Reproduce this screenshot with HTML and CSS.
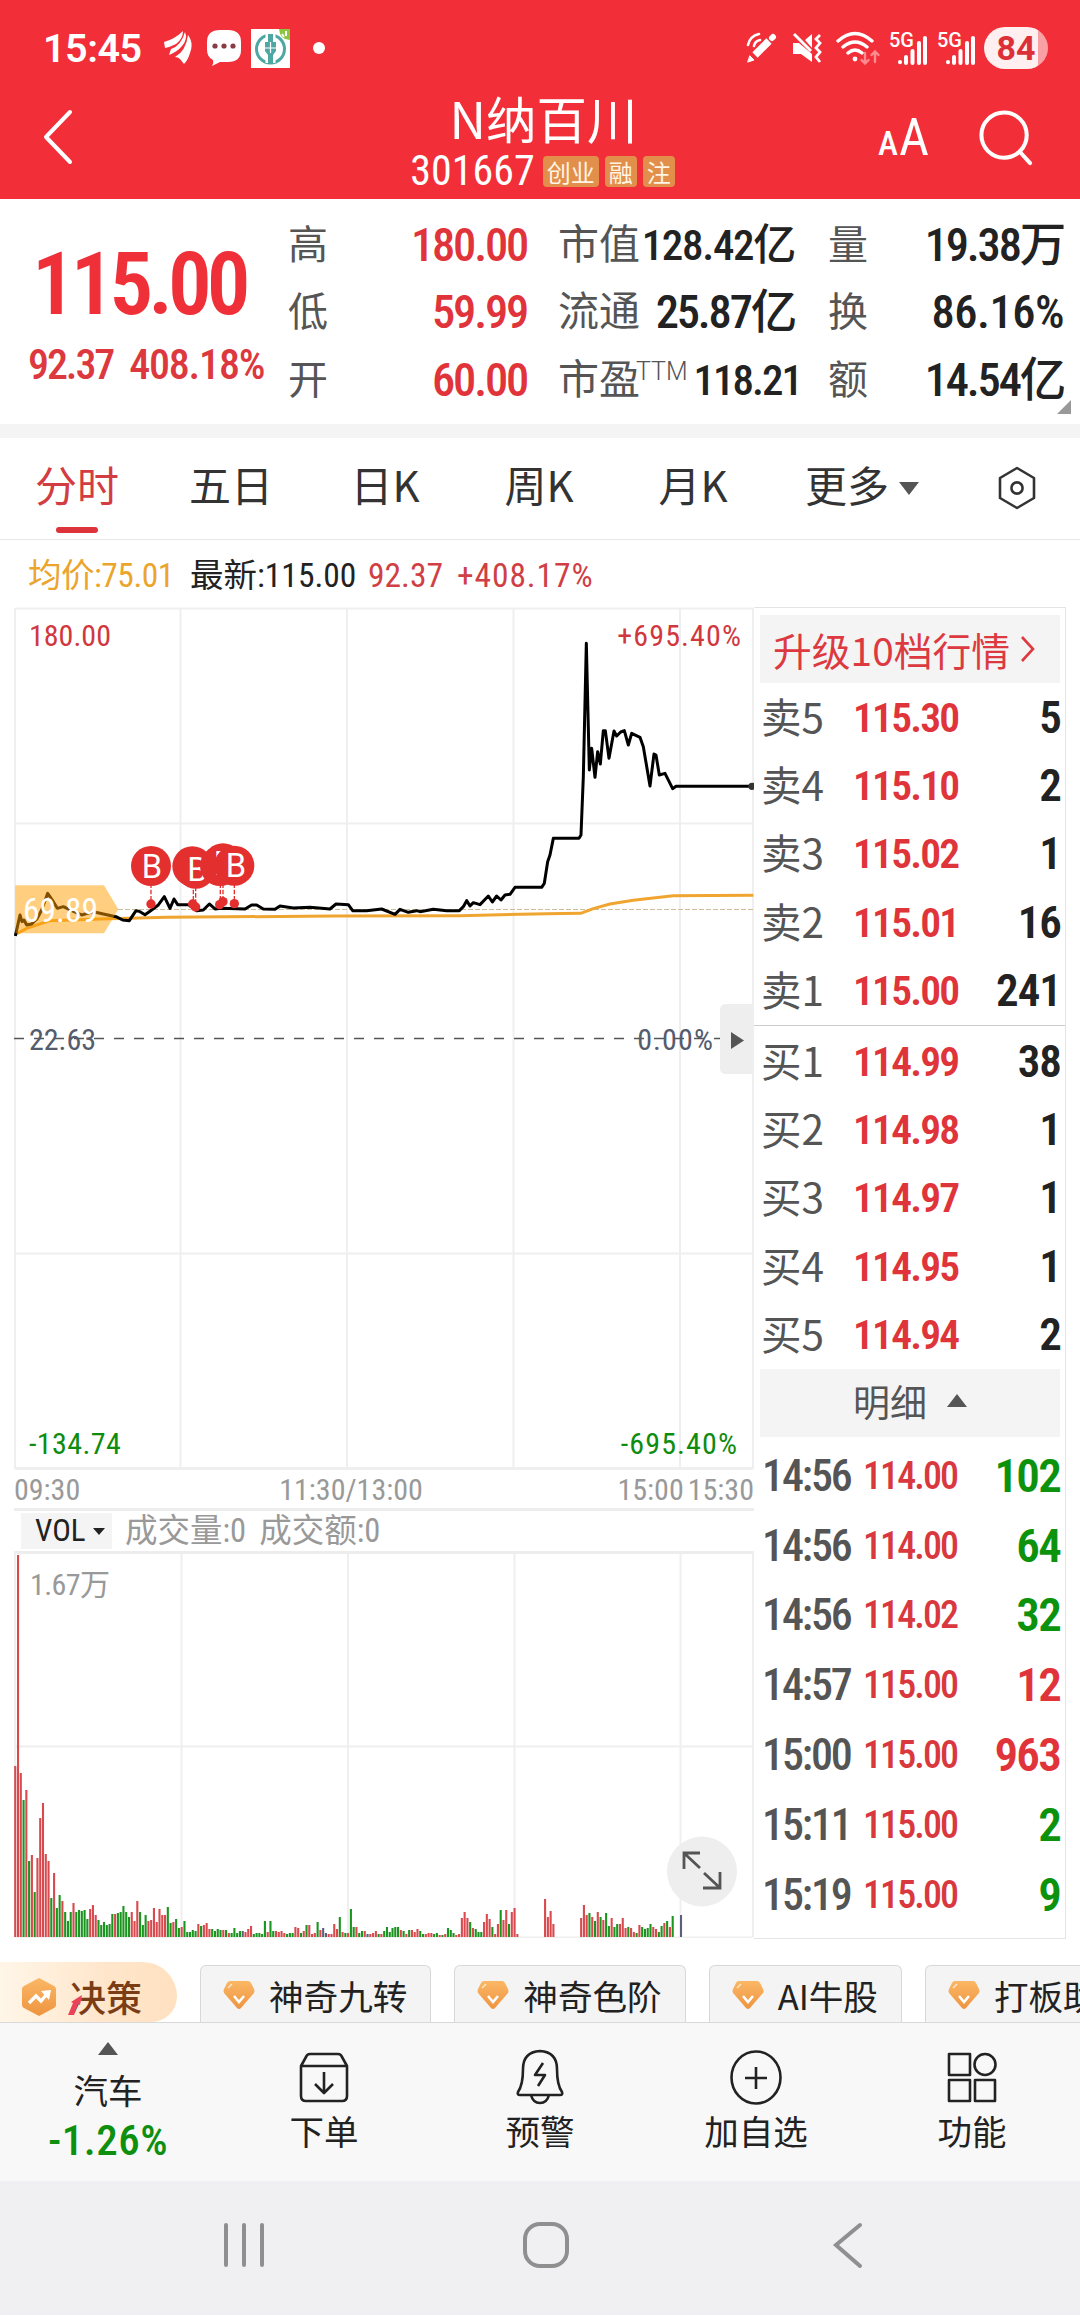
FILE: index.html
```
<!DOCTYPE html>
<html lang="zh-CN">
<head>
    <meta charset="UTF-8">
    <meta name="viewport" content="width=device-width, initial-scale=1.0">
    <title>N纳百川 301667</title>
    <link rel="stylesheet" href="styles.css">
</head>
<body>
    <header class="header">
        <div class="status-bar">
            <span class="clock">15:45</span>
            <svg class="st-feather" width="30" height="34" viewBox="0 0 30 34" fill="#fff">
                <path d="M1 11 Q12 8 20 0 Q20 8 13 13 Q7 16 2 17 Z"/>
                <path d="M22 1 Q25 8 19 15 Q14 21 6 24 L8 18 Q18 15 22 1 Z"/>
                <path d="M25 4 Q31 12 27 22 Q25 29 21 33 L17 28 Q15 26 12 26 Q23 20 25 4 Z"/>
            </svg>
            <svg class="st-bubble" width="36" height="38" viewBox="0 0 36 38">
                <path d="M14 1 H22 Q35 1 35 13 V21 Q35 33 22 33 H14 L6 37 Q8 34 7 31 Q1 28 1 21 V13 Q1 1 14 1 Z" fill="#fff"/>
                <g fill="#8c3b45"><circle cx="9" cy="17" r="2.6"/><circle cx="18" cy="17" r="2.6"/><circle cx="27" cy="17" r="2.6"/></g>
            </svg>
            <svg class="st-bank" width="39" height="39" viewBox="0 0 39 39">
                <rect width="39" height="39" fill="#fff"/>
                <path d="M28 0 H39 V11 Q29 11 28 0 Z" fill="#8cc63f"/>
                <path d="M31 5 L33 8 M35 2 V7" stroke="#fff" stroke-width="2"/>
                <circle cx="19.500" cy="20" r="14" fill="none" stroke="#4fa7a3" stroke-width="3"/>
                <path d="M19.500 4 V34" stroke="#fff" stroke-width="10"/>
                <path d="M17 5 H22 V13 H25 V22 L22 26 V34 H17 V26 L14 22 V13 H17 Z" fill="#4fa7a3"/>
                <path d="M19.500 13 V24 M14 19 H25" stroke="#fff" stroke-width="1.200"/>
            </svg>
            <span class="st-dot"></span>
            <div class="st-right">
                <svg width="32" height="32" viewBox="0 0 32 32" fill="none" stroke="#fff" stroke-linecap="round">
                    <path d="M9 23 L23 9" stroke-width="7.500" stroke-linecap="butt"/>
                    <path d="M26 6 L27 5" stroke-width="6"/>
                    <path d="M2 30 L8 28 L4 24 Z" fill="#fff" stroke-width="1"/>
                    <path d="M2 13 Q4 4 13 2 M8 14 Q9 9 14 8" stroke-width="2.600"/>
                </svg>
                <svg width="30" height="32" viewBox="0 0 30 32">
                    <path d="M1 11 H7 L20 22 V30 L9 22 H1 Z M13 8 L20 2 V16 Z" fill="#fff"/>
                    <path d="M2 2 L19 19" stroke="#fff" stroke-width="3"/>
                    <path d="M28 3 L24 7 L28 11 L24 16 L28 20 L24 25 L28 30" fill="none" stroke="#fff" stroke-width="2.800"/>
                </svg>
                <svg class="wifi" width="44" height="34" viewBox="0 0 44 34" fill="none" stroke="#fff" stroke-width="3.400" stroke-linecap="round">
                    <path d="M2 10 Q19 -5 36 10 M7 16 Q19 6 31 16 M12 22 Q19 16 26 22"/>
                    <circle cx="19" cy="28" r="2.400" fill="#fff" stroke="none"/>
                    <path d="M29 22 V32 M25.500 29 L29 32.500 L32.500 29 M39 31 V21 M35.500 24 L39 20.500 L42.500 24" stroke="#ff8a8f" stroke-width="2.400"/>
                </svg>
                <span class="signal"><i>5G</i>
                    <svg width="40" height="34" viewBox="0 0 40 34" stroke="#fff" stroke-width="4" stroke-linecap="round">
                        <path d="M12 31 V31.200 M18 26 V32 M24.500 20 V32 M31 12 V32 M37 7 V32"/>
                    </svg>
                </span>
                <span class="signal"><i>5G</i>
                    <svg width="40" height="34" viewBox="0 0 40 34" stroke="#fff" stroke-width="4" stroke-linecap="round">
                        <path d="M12 31 V31.200 M18 26 V32 M24.500 20 V32 M31 12 V32 M37 7 V32"/>
                    </svg>
                </span>
                <span class="battery">84</span>
            </div>
        </div>
        <div class="title-bar">
            <svg class="back" width="36" height="60" viewBox="0 0 36 60" fill="none" stroke="#fff" stroke-width="4" stroke-linecap="round" stroke-linejoin="round">
                <path d="M28 6 L4 31 L28 56"/>
            </svg>
            <div class="stock">
                <div class="stock-name">N纳百川</div>
                <div class="stock-code"><span class="code">301667</span><b>创业</b><b>融</b><b>注</b></div>
            </div>
            <div class="title-tools">
                <span class="font-size"><small>A</small>A</span>
                <svg width="54" height="56" viewBox="0 0 56 58" fill="none" stroke="#fff" stroke-width="4.200" stroke-linecap="round">
                    <circle cx="26" cy="26" r="23.500"/><path d="M42 43 L53 55"/>
                </svg>
            </div>
        </div>
    </header>

    <section class="quote">
        <div class="price-box">
            <div class="price">115.00</div>
            <div class="change"><span>92.37</span><span>408.18%</span></div>
        </div>
        <dl class="col col-price">
            <div><dt>高</dt><dd class="red">180.00</dd></div>
            <div><dt>低</dt><dd class="red">59.99</dd></div>
            <div><dt>开</dt><dd class="red">60.00</dd></div>
        </dl>
        <dl class="col col-cap">
            <div><dt>市值</dt><dd class="tight">128.42亿</dd></div>
            <div><dt>流通</dt><dd>25.87亿</dd></div>
            <div><dt>市盈<sup>TTM</sup></dt><dd class="tight ttm">118.21</dd></div>
        </dl>
        <dl class="col col-vol">
            <div><dt>量</dt><dd>19.38万</dd></div>
            <div><dt>换</dt><dd class="pct">86.16%</dd></div>
            <div><dt>额</dt><dd>14.54亿</dd></div>
        </dl>
        <i class="corner"></i>
    </section>

    <nav class="tabs">
        <span class="active">分时</span>
        <span>五日</span>
        <span>日K</span>
        <span>周K</span>
        <span>月K</span>
        <span>更多<i class="down"></i></span>
        <span>
            <svg width="38" height="44" viewBox="0 0 38 44" fill="none" stroke="#333" stroke-width="2.600" stroke-linejoin="round">
                <path d="M19 2 L36 12 V32 L19 42 L2 32 V12 Z"/><circle cx="19" cy="22" r="5.600"/>
            </svg>
        </span>
    </nav>

    <div class="info-line">
        <span class="avg">均价:75.01</span>
        <span>最新:115.00</span>
        <span class="up">92.37</span>
        <span class="up pct">+408.17%</span>
    </div>

    <main class="board">
        <div class="charts">
            <svg class="chart" width="740" height="863" viewBox="14 607 740 863">
                <g class="grid">
                    <path d="M15 608.500 H753 M15 608 V1469 M753 608 V1469 M15 823.500 H753 M15 1253.500 H753"/>
                    <path d="M180.500 608 V1469 M347 608 V1469 M513.500 608 V1469 M680 608 V1469"/>
                    <path d="M15 1468.500 H753" stroke-width="3"/>
                </g>
                <path class="zero" d="M14 1038.500 H722"/>
                <path class="last" d="M118 909.500 H753"/>
                <g transform="translate(0 600) scale(.33333)">
                    <path class="avg-line" d="M46 1003 L80 985 L150 962 L300 957 L500 952 L1000 948 L1380 947 L1640 941 L1742 940 L1780 926 L1830 912 L1900 901 L2020 887 L2260 886"/>
                    <path class="price-line" d="M46 1008 L60 945 L66 965 L72 960 L80 975 L95 972 L112 955 L125 930 L143 880 L160 905 L172 925 L190 920 L215 932 L245 945 L280 935 L320 944 L348 950 L368 960 L388 962 L408 932 L420 935 L435 944 L452 932 L475 915 L493 890 L510 925 L522 897 L533 914 L565 914 L580 925 L590 932 L610 930 L628 912 L645 927 L665 925 L735 927 L755 915 L770 915 L790 927 L825 928 L840 918 L880 924 L930 922 L990 927 L1008 912 L1045 914 L1058 932 L1100 932 L1145 927 L1185 943 L1200 928 L1225 937 L1250 932 L1260 935 L1300 928 L1340 932 L1378 932 L1390 920 L1400 902 L1410 918 L1420 908 L1440 914 L1465 888 L1477 906 L1490 888 L1503 900 L1515 885 L1530 883 L1545 862 L1625 862 L1633 850 L1643 785 L1650 765 L1660 715 L1737 715 L1743 705 L1750 530 L1759 130 L1768 510 L1775 445 L1785 532 L1793 455 L1801 492 L1810 392 L1816 392 L1827 475 L1842 393 L1850 408 L1862 396 L1873 392 L1885 435 L1895 400 L1920 412 L1930 440 L1950 558 L1962 462 L1968 465 L1978 525 L1995 520 L2018 566 L2028 559 L2260 559"/>
                    <path d="M46 856 H312 L355 928 L312 1000 H46 Z" fill="#ffa000" fill-opacity=".5"/>
                    <circle cx="2256" cy="559" r="11" fill="#333"/>
                    <path class="stem" d="M453 850 V912 M580 850 V912 M587 860 V912 M661 850 V912 M669 850 V912 M703 850 V912"/>
                    <g fill="#e3302f">
                        <circle cx="453" cy="912" r="14"/><circle cx="578" cy="912" r="14"/><circle cx="587" cy="921" r="14"/>
                        <circle cx="659" cy="914" r="14"/><circle cx="669" cy="905" r="14"/><circle cx="703" cy="911" r="14"/>
                    </g>
                    <g class="mark">
                        <circle cx="453" cy="798" r="60"/><text x="456" y="833">B</text>
                        <circle cx="577" cy="799" r="60"/>
                        <circle cx="587" cy="806" r="60"/><text x="592" y="843">B</text>
                        <circle cx="660" cy="798" r="60"/>
                        <circle cx="669" cy="790" r="60"/><text x="672" y="825">B</text>
                        <circle cx="703" cy="797" r="60"/><text x="708" y="831">B</text>
                    </g>
                </g>
                <g class="axis">
                    <text x="23" y="922" class="tag">69.89</text>
                    <text x="29" y="646" fill="#d0383e">180.00</text>
                    <text x="742" y="646" fill="#d0383e" class="pct">+695.40%</text>
                    <text x="29" y="1050" fill="#555c6e">22.63</text>
                    <text x="714" y="1050" fill="#555c6e" class="pct">0.00%</text>
                    <text x="29" y="1454" fill="#0e8c0e" letter-spacing=".4">-134.74</text>
                    <text x="738" y="1454" fill="#0e8c0e" class="pct">-695.40%</text>
                </g>
                <path d="M753 1004 H726 Q720 1004 720 1010 V1068 Q720 1074 726 1074 H753 Z" fill="#eee"/>
                <path d="M731 1032 L744 1040.500 L731 1049 Z" fill="#555"/>
            </svg>
            <div class="times">
                <span>09:30</span><span>11:30/13:00</span><span class="t-close">15:00</span><span>15:30</span>
            </div>
            <div class="vol-head">
                <span class="vol-pick">VOL<i class="down"></i></span>
                <span>成交量:0</span>
                <span>成交额:0</span>
            </div>
            <svg class="volume" width="740" height="384" viewBox="14 1553 740 384">
                <g class="grid">
                    <path d="M15 1553 V1936 M753 1553 V1936 M15 1745.500 H753 M15 1936.500 H753"/>
                    <path d="M181.500 1553 V1936 M348 1553 V1936 M514.500 1553 V1936 M680.500 1553 V1936"/>
                </g>
                <g id="bars"></g>
                <text x="30" y="1594" fill="#999">1.67万</text>
                <circle cx="702" cy="1870.500" r="35" fill="#eee"/>
                <path d="M700 1867 L685 1853 M684 1868 V1852 H700 M704 1872 L719 1886 M703 1887 H720 V1871" fill="none" stroke="#555" stroke-width="2.800"/>
            </svg>
        </div>

        <aside class="depth">
            <div class="upgrade">升级10档行情
                <svg width="16" height="28" viewBox="0 0 16 28" fill="none" stroke="#dc3a40" stroke-width="2.600"><path d="M2 2 L13 14 L2 26"/></svg>
            </div>
            <ul class="orders sell">
                <li><span>卖5</span><b>115.30</b><em>5</em></li>
                <li><span>卖4</span><b>115.10</b><em>2</em></li>
                <li><span>卖3</span><b>115.02</b><em>1</em></li>
                <li><span>卖2</span><b>115.01</b><em>16</em></li>
                <li><span>卖1</span><b>115.00</b><em>241</em></li>
            </ul>
            <ul class="orders buy">
                <li><span>买1</span><b>114.99</b><em>38</em></li>
                <li><span>买2</span><b>114.98</b><em>1</em></li>
                <li><span>买3</span><b>114.97</b><em>1</em></li>
                <li><span>买4</span><b>114.95</b><em>1</em></li>
                <li><span>买5</span><b>114.94</b><em>2</em></li>
            </ul>
            <div class="detail-head">明细<i class="tri-up"></i></div>
            <ul class="ticks">
                <li><span>14:56</span><b>114.00</b><em class="green">102</em></li>
                <li><span>14:56</span><b>114.00</b><em class="green">64</em></li>
                <li><span>14:56</span><b>114.02</b><em class="green">32</em></li>
                <li><span>14:57</span><b>115.00</b><em class="red">12</em></li>
                <li><span>15:00</span><b>115.00</b><em class="red">963</em></li>
                <li><span>15:11</span><b>115.00</b><em class="green">2</em></li>
                <li><span>15:19</span><b>115.00</b><em class="green">9</em></li>
            </ul>
        </aside>
    </main>

    <div class="chips">
        <span class="decision">
            <svg width="36" height="40" viewBox="0 0 36 40">
                <path d="M18 1 L33 9 Q35 10 35 12 V28 Q35 30 33 31 L18 39 L3 31 Q1 30 1 28 V12 Q1 10 3 9 Z" fill="url(#gold)"/>
                <path d="M8 26 L15 19 L20 24 L27 16" fill="none" stroke="#fff" stroke-width="3.400"/>
                <path d="M20 14 L30 13 L28 23 Z" fill="#fff"/>
            </svg>
            <span>决策</span>
            <svg class="arrow" width="16" height="22" viewBox="0 0 16 22"><path d="M1 21 L6 9 L4 8 L15 1 L13 11 L11 10 L7 21 Z" fill="#e9435a"/></svg>
        </span>
        <span class="chip"><svg width="32" height="30"><use href="#gem"/></svg>神奇九转</span>
        <span class="chip"><svg width="32" height="30"><use href="#gem"/></svg>神奇色阶</span>
        <span class="chip"><svg width="32" height="30"><use href="#gem"/></svg>AI牛股</span>
        <span class="chip"><svg width="32" height="30"><use href="#gem"/></svg>打板助手</span>
    </div>

    <nav class="toolbar">
        <div class="index">
            <i class="tri-up"></i>
            <span>汽车</span>
            <strong>-1.26%</strong>
        </div>
        <div>
            <svg width="54" height="58" viewBox="0 0 54 58">
                <path d="M4 17 L9 8 Q10 5 13 5 H41 Q44 5 45 8 L50 17 V47 Q50 52 45 52 H9 Q4 52 4 47 Z M4 17 H50 M27 23 V43 M18 35 L27 44 L36 35"/>
            </svg>
            <span>下单</span>
        </div>
        <div>
            <svg width="54" height="58" viewBox="0 0 54 58">
                <path d="M27 2 Q44 3 44 20 Q44 36 49 43 Q50 46 47 46 H7 Q4 46 5 43 Q10 36 10 20 Q10 3 27 2 Z M18 46 Q20 54 27 54 Q34 54 36 46 M30 14 L22 26 H32 L25 37"/>
            </svg>
            <span>预警</span>
        </div>
        <div>
            <svg width="54" height="58" viewBox="0 0 54 58">
                <ellipse cx="27" cy="28.500" rx="24.500" ry="26"/><path d="M27 18 V40 M16 29 H38"/>
            </svg>
            <span>加自选</span>
        </div>
        <div>
            <svg width="54" height="58" viewBox="0 0 54 58">
                <path d="M4 5 H25 V26 H4 Z M4 31 H25 V52 H4 Z M30 31 H50 V52 H30 Z"/><circle cx="40" cy="15.500" r="10.500"/>
            </svg>
            <span>功能</span>
        </div>
    </nav>

    <footer class="sys-nav">
        <svg width="48" height="48" viewBox="0 0 48 48"><path d="M6 4 V44 M24 4 V44 M42 4 V44"/></svg>
        <svg width="48" height="48" viewBox="0 0 48 48"><rect x="3" y="3" width="42" height="42" rx="15"/></svg>
        <svg width="48" height="48" viewBox="0 0 48 48"><path d="M36 4 L12 24 L36 45"/></svg>
    </footer>

    <svg width="0" height="0" class="defs">
        <linearGradient id="gold" x1="0" y1="0" x2="0" y2="1">
            <stop offset="0" stop-color="#fbb765"/><stop offset="1" stop-color="#ee9440"/>
        </linearGradient>
        <symbol id="gem" viewBox="0 0 32 30">
            <path d="M7 1 H25 Q27 1 28 3 L31 9 Q32 11 31 13 L18 28 Q16 30 14 28 L1 13 Q0 11 1 9 L4 3 Q5 1 7 1 Z" fill="url(#gold)"/>
            <path d="M11 16 L16 22 L21 16" fill="none" stroke="#fff" stroke-width="2.600"/>
            <path d="M5 8 L9 4" stroke="#fff" stroke-width="1.400" opacity=".7"/>
        </symbol>
    </svg>

    <script>
        // minute volume, height in px + direction (r up, g down, d flat), 0 = no trade
        const volume = `171r 382r 164r 137g 147r 76g 82r 45g 79r 119r 134r 83r 76r 39g 64r 29g 42g 36r 25g 16g
            25g 34r 25g 27g 26g 27g 18g 28r 32r 22r 17g 12g 15g 12g 13g 23g 23r 24g 25g 31g
            25g 20g 25r 16r 36r 25g 12g 22g 16r 17r 29r 15r 28r 22r 22r 30g 14g 15r 18g 9g
            10r 16g 5g 5g 7g 6g 13r 11g 12r 14r 8r 8g 6g 8g 7g 7r 7g 4r 4g 9g
            4g 6g 6d 5r 8r 11r 3g 4g 4g 3g 16g 5r 16g 6g 6r 5r 6r 4r 3g 4g
            4g 10r 9r 4g 6r 12g 12r 3r 4r 15g 7r 9d 4d 3r 3r 13r 8r 20g 5r 4g
            4r 28g 10g 10r 4g 6g 6r 3d 3r 4r 6r 3g 3r 6g 10g 5g 9g 10g 10g 7r
            6g 3r 7g 7r 5r 8r 6g 3g 3r 4r 4r 3g 4g 2r 2g 3r 9g 7g 4g 2r
            3r 19r 25r 19r 15g 9r 8g 5g 5g 15r 23r 18r 10g 3r 13r 27g 17r 27r 13g 25r
            29r 3r 0 0 0 0 0 0 0 0 0 38r 20r 26r 13r 0 0 0 0 0
            0 0 0 0 19r 32r 22r 24g 20r 16g 25r 20g 17r 24g 11g 19r 10g 13g 13r 19r
            9r 10g 9r 5r 4g 12r 10g 8g 9g 13g 10r 8r 5g 11g 14r 16g 10r 21g 0 0 22d`.split(/\s+/);
        const colors = { r: '#d94a4f', g: '#1c9420', d: '#5a5f7a' };
        const bars = document.getElementById('bars');
        volume.forEach((v, i) => {
            const h = parseInt(v);
            if (!h) return;
            const rect = document.createElementNS('http://www.w3.org/2000/svg', 'rect');
            rect.setAttribute('x', 14.2 + i * 2.774);
            rect.setAttribute('y', 1936 - h);
            rect.setAttribute('width', 2.1);
            rect.setAttribute('height', h);
            rect.setAttribute('fill', colors[v.slice(-1)]);
            bars.appendChild(rect);
        });
    </script>
</body>
</html>
```
FILE: styles.css
```
* {
    box-sizing: border-box;
}
body {
    margin: 0;
    width: 1080px;
    height: 2316px;
    overflow: hidden;
    background: #fff;
    color: #333;
    font-family: Roboto, "Noto Sans CJK SC", sans-serif;
    font-stretch: 75%;
}
svg {
    display: block;
    flex: none;
}
ul, dl, dd {
    margin: 0;
    padding: 0;
    list-style: none;
}
i, em {
    font-style: normal;
}
.defs {
    position: absolute;
}
.red {
    color: #e1343a;
}
.green {
    color: #0d920d;
}

/* header */
.header {
    height: 199px;
    background: #f22f38;
    color: #fff;
}
.status-bar {
    height: 96px;
    padding: 0 32px 0 43px;
    display: flex;
    align-items: center;
}
.clock {
    width: 98px;
    font-size: 39.5px;
    font-weight: 600;
    font-stretch: 100%;
    letter-spacing: -0.5px;
}
.st-feather {
    margin-left: 22px;
}
.st-bubble {
    margin-left: 13px;
}
.st-bank {
    margin-left: 9px;
}
.st-dot {
    width: 12px;
    height: 12px;
    margin-left: 23px;
    border-radius: 50%;
    background: #fff;
}
.st-right {
    margin-left: auto;
    display: flex;
    align-items: center;
}
.st-right svg {
    margin-right: 14px;
}
.st-right .wifi {
    margin-right: 8px;
}
.st-right .signal {
    position: relative;
    margin-right: 8px;
}
.st-right .signal svg {
    margin: 0;
}
.signal i {
    position: absolute;
    left: 1px;
    top: -1px;
    font-size: 20px;
    line-height: 20px;
    font-weight: 500;
    font-stretch: 88%;
}
.battery {
    width: 64px;
    height: 42px;
    border-radius: 21px;
    background: linear-gradient(90deg, #ffeff0 84%, #f9a0a5 84%);
    color: #dc3038;
    font-size: 34px;
    line-height: 43px;
    font-weight: 700;
    font-stretch: 100%;
    text-align: center;
}
.title-bar {
    height: 103px;
    display: grid;
    grid-template-columns: 300px 1fr 300px;
}
.back {
    margin: 10px 0 0 42px;
}
.stock {
    text-align: center;
}
.stock-name {
    margin: -4px 0 0 7px;
    font: 400 50.5px/50px "Noto Sans CJK SC", sans-serif;
}
.stock-code {
    display: flex;
    justify-content: center;
    align-items: center;
    gap: 6px;
    height: 32px;
    margin: 13px 0 0 5px;
}
.code {
    margin-right: 2px;
    font-size: 42px;
    line-height: 32px;
    font-weight: 400;
}
.stock-code b {
    padding: 0 4px;
    border-radius: 4px;
    background: #e28f4b;
    color: #fff5e4;
    font: 400 24px/31px "Noto Sans CJK SC", sans-serif;
}
.title-tools {
    display: flex;
    justify-content: flex-end;
    align-items: flex-start;
    padding-right: 47px;
}
.title-tools svg {
    margin-top: 14px;
}
.font-size {
    margin: 12px 50px 0 0;
    font-size: 52px;
    line-height: 60px;
    font-weight: 400;
    font-stretch: 84%;
}
.font-size small {
    margin-right: 1px;
    font-size: 34px;
    font-weight: 500;
}

/* quote */
.quote {
    position: relative;
    height: 239px;
    display: grid;
    grid-template-columns: 288px 239px 31px 237px 33px 236px;
    border-bottom: 14px solid #f4f4f4;
    padding-top: 13px;
}
.price {
    margin-top: 28px;
    padding-left: 32px;
    color: #f03038;
    font-size: 87px;
    line-height: 88px;
    font-weight: 600;
    letter-spacing: -5px;
}
.change {
    display: flex;
    margin-top: 12px;
    padding-left: 28px;
    gap: 16px;
    color: #dc383e;
    font-size: 42px;
    line-height: 50px;
    font-weight: 500;
    letter-spacing: -2.1px;
}
.change span + span {
    letter-spacing: -1.2px;
}
.col-price {
    grid-column: 2;
}
.col-cap {
    grid-column: 4;
}
.col-vol {
    grid-column: 6;
}
.col div {
    display: flex;
    justify-content: space-between;
    height: 67.3px;
    line-height: 67px;
}
.col dt {
    color: #555;
    font-size: 40px;
    white-space: nowrap;
}
.col dd {
    color: #222;
    font-size: 46.5px;
    font-weight: 500;
    letter-spacing: -2.2px;
    white-space: nowrap;
}
.col dd.red {
    color: #e1343a;
}
.col dd.pct {
    letter-spacing: -0.5px;
}
.col dd.tight {
    font-size: 43px;
    letter-spacing: -1.3px;
}
.col dd.ttm {
    margin-right: -6px;
    letter-spacing: -2px;
}
.col-cap dt {
    width: 81px;
    font-size: 41px;
}
.col sup {
    display: inline-block;
    margin-left: -4px;
    vertical-align: 14px;
    font-size: 25px;
    line-height: 20px;
    font-weight: 300;
    font-stretch: 95%;
}
.corner {
    position: absolute;
    right: 9px;
    bottom: 10px;
    border: 7.5px solid #999;
    border-top-color: transparent;
    border-left-color: transparent;
}

/* tabs */
.tabs {
    height: 102px;
    display: grid;
    grid-template-columns: repeat(5, 154px) 184px 126px;
    border-bottom: 1px solid #e8e8e8;
    font: 400 42px/92px "Noto Sans CJK SC", sans-serif;
}
.tabs span {
    position: relative;
    display: flex;
    justify-content: center;
    height: 92px;
    align-items: center;
}
.tabs svg, .tabs .down {
    position: relative;
    top: 4px;
}
.tabs .active {
    color: #d23c42;
}
.tabs .active::after {
    content: "";
    position: absolute;
    left: 56px;
    bottom: -3px;
    width: 42px;
    height: 6px;
    border-radius: 3px;
    background: #dc343a;
}
.down {
    margin-left: 10px;
    border: 10px solid transparent;
    border-top: 13px solid #555;
    border-bottom: 0;
}
.info-line {
    height: 67px;
    padding: 5px 0 0 28px;
    display: grid;
    grid-template-columns: 162px 178px 89px 200px;
    align-items: center;
    color: #222;
    font-size: 33.5px;
    line-height: 60px;
    white-space: nowrap;
}
.info-line .avg {
    color: #eba42c;
    letter-spacing: -0.5px;
}
.info-line .up {
    color: #cf3f45;
}
.info-line .pct {
    letter-spacing: 0.9px;
}

/* board */
.board {
    height: 1332px;
    display: flex;
    padding-left: 14px;
}
.charts {
    width: 740px;
}
.grid {
    fill: none;
    stroke: #efefef;
    stroke-width: 2;
}
.zero {
    stroke: #555;
    stroke-width: 1.5;
    stroke-dasharray: 10 10;
}
.last {
    stroke: #cdbd9b;
    stroke-dasharray: 5 2;
}
.avg-line, .price-line {
    fill: none;
    stroke: #f0a531;
    stroke-width: 9;
    stroke-linejoin: round;
}
.price-line {
    stroke: #000;
}
.stem {
    stroke: #e3302f;
    stroke-width: 4;
    stroke-dasharray: 14 5;
}
.mark circle {
    fill: #e3302f;
}
.mark text {
    fill: #fff;
    font-size: 98px;
    font-stretch: 90%;
    text-anchor: middle;
}
.axis, .volume {
    font-size: 30px;
}
.axis .tag {
    fill: #fff;
    font-size: 33.5px;
}
.axis .pct {
    letter-spacing: 1.1px;
    text-anchor: end;
}
.times {
    height: 38px;
    display: flex;
    padding-top: 2px;
    color: #999;
    font-size: 30px;
    line-height: 36px;
}
.times span:nth-child(2) {
    margin-left: 199px;
}
.times .t-close {
    margin: 0 4px 0 auto;
}
.vol-head {
    height: 46px;
    display: flex;
    align-items: center;
    gap: 13px;
    padding-left: 7px;
    border: solid #ededed;
    border-width: 3px 0;
    color: #999;
    font-size: 32.5px;
    line-height: 42px;
}
.vol-pick {
    width: 91px;
    height: 36px;
    padding-left: 14px;
    display: flex;
    align-items: center;
    background: #f4f4f4;
    color: #222;
    font-size: 31px;
    font-stretch: 84%;
}
.vol-pick .down {
    margin-left: 7px;
    border-width: 7px 6px 0;
    border-top-color: #222;
}
.volume text {
    letter-spacing: -0.6px;
}

/* depth */
.depth {
    width: 312px;
    padding: 7px 5px 0 6px;
    border: 1px solid #e4e4e4;
    border-width: 1px 1px 1px 0;
}
.upgrade {
    height: 68px;
    display: flex;
    align-items: center;
    gap: 10px;
    padding-left: 13px;
    background: #f4f4f4;
    color: #dc3a40;
    font: 400 38.8px/64px "Noto Sans CJK SC", sans-serif;
    white-space: nowrap;
}
.orders {
    margin: 0 -5px 0 -6px;
    padding: 1px 4px 0 7px;
}
.orders li {
    height: 68.2px;
    display: grid;
    grid-template-columns: 92px 1fr auto;
    line-height: 67px;
}
.orders.buy {
    padding-top: 2px;
    border-top: 1px solid #ccc;
}
.orders span {
    color: #555;
    font: 400 40.5px/64px "Noto Sans CJK SC", sans-serif;
}
.orders b {
    color: #df343a;
    font-size: 41.5px;
    font-weight: 600;
    letter-spacing: -1.8px;
}
.orders em {
    color: #222;
    font-size: 45px;
    font-weight: 600;
    letter-spacing: -1px;
}
.detail-head {
    height: 68px;
    display: flex;
    justify-content: center;
    align-items: center;
    gap: 20px;
    padding-bottom: 4px;
    background: #f4f4f4;
    color: #555;
    font: 400 37px/64px "Noto Sans CJK SC", sans-serif;
}
.tri-up {
    border: 10px solid transparent;
    border-bottom: 13px solid #555;
    border-top: 0;
}
.ticks {
    padding: 4px 0 0 2px;
}
.ticks li {
    height: 69.8px;
    display: grid;
    grid-template-columns: 101px 1fr auto;
    line-height: 70px;
}
.ticks span {
    color: #555;
    font-size: 44px;
    font-weight: 500;
    letter-spacing: -2.1px;
}
.ticks b {
    color: #d8383e;
    font-size: 38px;
    font-weight: 500;
    letter-spacing: -1.9px;
}
.ticks em {
    font-size: 47px;
    font-weight: 600;
    letter-spacing: -1.8px;
}

/* chips */
.chips {
    height: 84px;
    display: flex;
    align-items: flex-end;
    gap: 23px;
    overflow: hidden;
    border-bottom: 1px solid #d8d8d8;
    white-space: nowrap;
}
.decision {
    position: relative;
    flex: none;
    width: 177px;
    height: 60px;
    display: flex;
    gap: 13px;
    padding: 15px 0 0 21px;
    border-radius: 0 40px 30px 0;
    background: linear-gradient(90deg, #fff6e8, #ffe6cb 60%, #ffe1c0);
    color: #7b3d16;
    font: 500 36px/38px "Noto Sans CJK SC", sans-serif;
}
.decision .arrow {
    position: absolute;
    left: 67px;
    top: 32px;
}
.chip {
    flex: none;
    height: 57px;
    display: flex;
    align-items: center;
    gap: 14px;
    padding: 2px 23px 0 22px;
    border: 1px solid #d8d8d8;
    border-bottom: 0;
    border-radius: 6px 6px 0 0;
    background: #f4f4f4;
    color: #222;
    font: 400 34.6px/50px "Noto Sans CJK SC", sans-serif;
}

/* bottom toolbar */
.toolbar {
    height: 158px;
    display: grid;
    grid-template-columns: repeat(5, 216px);
    background: #f8f8f8;
    color: #222;
    font: 400 34.5px/44px "Noto Sans CJK SC", sans-serif;
}
.toolbar div {
    display: flex;
    flex-direction: column;
    align-items: center;
    padding-top: 26px;
}
.toolbar svg {
    margin-bottom: 1px;
    fill: none;
    stroke: #222;
    stroke-width: 2.6;
    stroke-linejoin: round;
}
.toolbar .index {
    padding-top: 19px;
}
.index span {
    margin-top: 12px;
}
.index strong {
    margin-top: 7px;
    color: #0e8f0e;
    font: 500 43px/44px Roboto, sans-serif;
    font-stretch: 78%;
    letter-spacing: 0.5px;
}
.sys-nav {
    height: 134px;
    display: flex;
    justify-content: center;
    align-items: center;
    gap: 254px;
    padding: 0 0 6px 12px;
    background: #f0f0f3;
    fill: none;
    stroke: #8f8f8f;
    stroke-width: 4;
    stroke-linecap: round;
}
```
